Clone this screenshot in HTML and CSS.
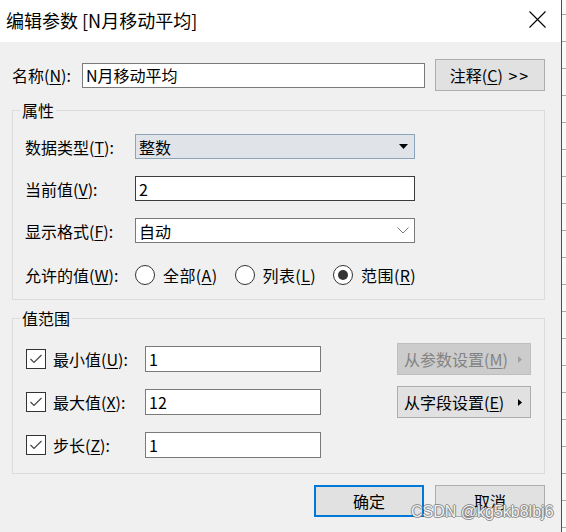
FILE: index.html
```html
<!DOCTYPE html>
<html lang="zh-CN">
<head>
<meta charset="utf-8">
<title>编辑参数</title>
<link rel="stylesheet" href="styles.css">
</head>
<body>
<div class="screen">
  <div class="dialog">
    <div class="titlebar">
      <span class="title">编辑参数 [N月移动平均]</span>
      <svg class="close" width="17" height="17" viewBox="0 0 17 17"><path d="M0.5 0.5L16.5 16.5M16.5 0.5L0.5 16.5" stroke="#000" stroke-width="1.1" fill="none"/></svg>
    </div>
    <div class="body">
      <div class="name-row">
        <span class="label name-label">名称(<u>N</u>):</span>
        <div class="field name-field">N月移动平均</div>
        <div class="btn comment-btn"><span>注释(<u>C</u>) <span class="gt">&gt;&gt;</span></span></div>
      </div>

      <div class="group props">
        <span class="legend">属性</span>
        <div class="props-grid">
          <span class="label">数据类型(<u>T</u>):</span>
          <div class="combo combo-blue"><span>整数</span><svg class="drop" width="9" height="5" viewBox="0 0 9 5"><path d="M0 0H9L4.5 5Z" fill="#000"/></svg></div>

          <span class="label">当前值(<u>V</u>):</span>
          <div class="field field-dark">2</div>

          <span class="label">显示格式(<u>F</u>):</span>
          <div class="combo"><span>自动</span><svg class="chev" width="12" height="7" viewBox="0 0 12 7"><path d="M0.5 0.5L6 6L11.5 0.5" stroke="#777" stroke-width="1" fill="none"/></svg></div>

          <span class="label">允许的值(<u>W</u>):</span>
          <div class="radios">
            <span class="radio-item"><span class="radio"></span><span class="radio-text">全部(<u>A</u>)</span></span>
            <span class="radio-item"><span class="radio"></span><span class="radio-text">列表(<u>L</u>)</span></span>
            <span class="radio-item"><span class="radio checked"></span><span class="radio-text">范围(<u>R</u>)</span></span>
          </div>
        </div>
      </div>

      <div class="group range">
        <span class="legend">值范围</span>
        <div class="range-grid">
          <span class="check-cell"><span class="checkbox"><svg width="18" height="18" viewBox="0 0 18 18"><path d="M3.5 9L7 12.5L14.5 5" stroke="#444" stroke-width="1.2" fill="none"/></svg></span><span class="label">最小值(<u>U</u>):</span></span>
          <div class="field">1</div>
          <div class="btn side-btn disabled"><span>从参数设置(<u>M</u>)</span><svg class="tri" width="4" height="7" viewBox="0 0 4 7"><path d="M0 0L4 3.5L0 7Z" fill="#a0a0a0"/></svg></div>

          <span class="check-cell"><span class="checkbox"><svg width="18" height="18" viewBox="0 0 18 18"><path d="M3.5 9L7 12.5L14.5 5" stroke="#444" stroke-width="1.2" fill="none"/></svg></span><span class="label">最大值(<u>X</u>):</span></span>
          <div class="field">12</div>
          <div class="btn side-btn"><span>从字段设置(<u>E</u>)</span><svg class="tri" width="4" height="7" viewBox="0 0 4 7"><path d="M0 0L4 3.5L0 7Z" fill="#000"/></svg></div>

          <span class="check-cell"><span class="checkbox"><svg width="18" height="18" viewBox="0 0 18 18"><path d="M3.5 9L7 12.5L14.5 5" stroke="#444" stroke-width="1.2" fill="none"/></svg></span><span class="label">步长(<u>Z</u>):</span></span>
          <div class="field">1</div>
        </div>
      </div>

      <div class="footer">
        <div class="btn ok-btn">确定</div>
        <div class="btn">取消</div>
      </div>
    </div>
  </div>
  <div class="edge"></div>
  <span class="watermark">CSDN @kg5kb8lbj6</span>
</div>
</body>
</html>
```

FILE: styles.css
```css
* { box-sizing: border-box; }
html, body { margin: 0; padding: 0; }
body {
  font-family: "Noto Sans CJK SC", "Noto Sans", sans-serif;
  font-size: 16px;
  color: #000;
  background: #fff;
}
u { text-decoration: underline; text-underline-offset: 2px; text-decoration-thickness: 1px; }

.screen {
  position: relative;
  width: 566px;
  height: 532px;
  display: flex;
  overflow: hidden;
}
.dialog {
  width: 562px;
  height: 532px;
  border-right: 1px solid #4d4d4d;
  display: flex;
  flex-direction: column;
}
.edge {
  flex: 1;
  background-color: #fafafa;
  background-image: repeating-linear-gradient(to bottom, transparent 0 14px, #a8a8a8 14px 15px, transparent 15px 27px);
}

.titlebar {
  height: 42px;
  background: #fff;
  display: flex;
  align-items: center;
  padding: 0 15px 3px 6px;
}
.title { font-size: 18px; line-height: 24px; }
.close { margin-left: auto; }

.body {
  flex: 1;
  background: #f0f0f0;
  padding: 17px 16px 0 12px;
  line-height: 20px;
}

.name-row {
  display: flex;
  align-items: center;
  height: 32px;
}
.name-label { width: 70px; }
.field {
  height: 25px;
  background: #fff;
  border: 1px solid #7a7a7a;
  padding: 0 3px;
  display: flex;
  align-items: center;
}
.name-field { width: 343px; margin-right: 10px; }
.field-dark { border-color: #3c3c3c; }

.btn {
  height: 32px;
  width: 110px;
  background: #e1e1e1;
  border: 1px solid #adadad;
  display: flex;
  align-items: center;
  justify-content: center;
}
.gt { letter-spacing: 2px; margin-left: 2px; }

.group {
  position: relative;
  border: 1px solid #dcdcdc;
}
.legend {
  position: absolute;
  top: -11px;
  left: 7px;
  padding: 0 2px;
  background: #f0f0f0;
  line-height: 20px;
}

.props {
  margin-top: 19px;
  padding: 23px 0 9px 12px;
}
.props-grid {
  display: grid;
  grid-template-columns: 110px 280px;
  grid-template-rows: 25px 25px 25px 30px;
  row-gap: 17px;
  align-items: center;
}
.props-grid .field { height: 25px; }
.combo {
  height: 25px;
  background: #fff;
  border: 1px solid #7a7a7a;
  padding: 0 4px 0 3px;
  display: flex;
  align-items: center;
  justify-content: space-between;
}
.combo-blue {
  background: #e0e4e9;
  border-color: #8ca4bb;
}
.drop { margin-right: 2px; }
.chev { margin-right: 1px; }

.radios {
  display: flex;
  align-items: center;
  height: 30px;
}
.radio-item {
  display: flex;
  align-items: center;
  gap: 8px;
  margin-right: 17px;
  white-space: nowrap;
}
.radio-text { letter-spacing: 0.4px; }
.radio {
  flex: none;
  width: 20px;
  height: 20px;
  border: 1px solid #333;
  border-radius: 50%;
  background: #fff;
  display: flex;
  align-items: center;
  justify-content: center;
}
.radio.checked::after {
  content: "";
  width: 10px;
  height: 10px;
  border-radius: 50%;
  background: #333;
}

.range {
  margin-top: 18px;
  padding: 27px 0 15px 13px;
}
.range-grid {
  display: grid;
  grid-template-columns: 119px 176px 210px;
  grid-template-rows: 26px 26px 26px;
  row-gap: 17px;
  align-items: center;
}
.range-grid .field { height: 26px; }
.check-cell {
  display: flex;
  align-items: center;
  gap: 7px;
}
.checkbox {
  flex: none;
  width: 20px;
  height: 20px;
  border: 1px solid #333;
  background: #fff;
  display: flex;
  align-items: center;
  justify-content: center;
}
.side-btn {
  width: 134px;
  margin: -3px 0 -3px 76px;
  justify-self: start;
  position: relative;
  justify-content: flex-start;
  padding-left: 6px;
}
.side-btn .tri { position: absolute; right: 8px; top: 12px; }
.side-btn.disabled {
  background: #cccccc;
  border-color: #bfbfbf;
  color: #838383;
}

.footer {
  margin-top: 11px;
  display: flex;
  justify-content: flex-end;
  gap: 11px;
}
.ok-btn { border: 2px solid #0078d7; }

.watermark {
  position: absolute;
  left: 411px;
  top: 502px;
  font-family: "Liberation Sans", Arial, sans-serif;
  font-size: 16px;
  line-height: 20px;
  color: rgba(250, 250, 250, 0.95);
  text-shadow: 1px 0 0 rgba(110,110,110,0.7), -1px 0 0 rgba(110,110,110,0.7), 0 1px 0 rgba(110,110,110,0.7), 0 -1px 0 rgba(110,110,110,0.7);
  white-space: nowrap;
}
```
